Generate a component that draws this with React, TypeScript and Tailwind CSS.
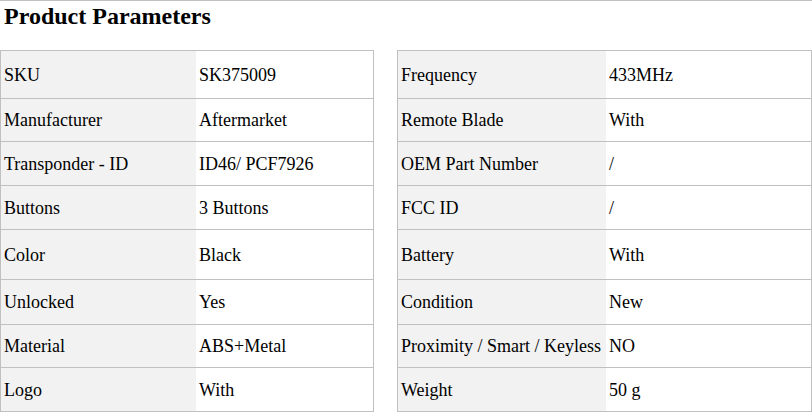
import React from "react";

type Row = { k: string; v: string; h: string };

const left: Row[] = [
  { k: "SKU", v: "SK375009", h: "h-[48px]" },
  { k: "Manufacturer", v: "Aftermarket", h: "h-[43px]" },
  { k: "Transponder - ID", v: "ID46/ PCF7926", h: "h-[44px]" },
  { k: "Buttons", v: "3 Buttons", h: "h-[44px]" },
  { k: "Color", v: "Black", h: "h-[50px]" },
  { k: "Unlocked", v: "Yes", h: "h-[45px]" },
  { k: "Material", v: "ABS+Metal", h: "h-[43px]" },
  { k: "Logo", v: "With", h: "h-[43px]" },
];

const right: Row[] = [
  { k: "Frequency", v: "433MHz", h: "h-[48px]" },
  { k: "Remote Blade", v: "With", h: "h-[43px]" },
  { k: "OEM Part Number", v: "/", h: "h-[44px]" },
  { k: "FCC ID", v: "/", h: "h-[44px]" },
  { k: "Battery", v: "With", h: "h-[50px]" },
  { k: "Condition", v: "New", h: "h-[45px]" },
  { k: "Proximity / Smart / Keyless", v: "NO", h: "h-[43px]" },
  { k: "Weight", v: "50 g", h: "h-[43px]" },
];

function Table({ rows, labelW, w }: { rows: Row[]; labelW: string; w: string }) {
  return (
    <div className={`${w} border border-[#c0c0c0] flex flex-col`}>
      {rows.map((r, i) => (
        <div
          key={r.k}
          className={`${r.h} flex ${i < rows.length - 1 ? "border-b border-[#c0c0c0]" : ""}`}
        >
          <div className={`${labelW} shrink-0 bg-[#f2f2f2] flex items-center pl-[3px] pt-[1px] whitespace-nowrap`}>
            {r.k}
          </div>
          <div className="flex-1 bg-white flex items-center pl-[3px] pt-[1px] whitespace-nowrap">{r.v}</div>
        </div>
      ))}
    </div>
  );
}

export default function App() {
  return (
    <div
      className="w-[812px] h-[412px] bg-white text-black text-[18px] overflow-hidden"
      style={{ fontFamily: '"Liberation Serif", "Times New Roman", serif' }}
    >
      <div className="border-t border-[#c0c0c0] h-[50px]">
        <h2 className="text-[24px] font-bold pl-[4px] pt-[1px] leading-[28px]">Product Parameters</h2>
      </div>
      <div className="flex gap-[23px]">
        <Table rows={left} labelW="w-[195px]" w="w-[374px]" />
        <Table rows={right} labelW="w-[208px]" w="w-[415px]" />
      </div>
    </div>
  );
}
